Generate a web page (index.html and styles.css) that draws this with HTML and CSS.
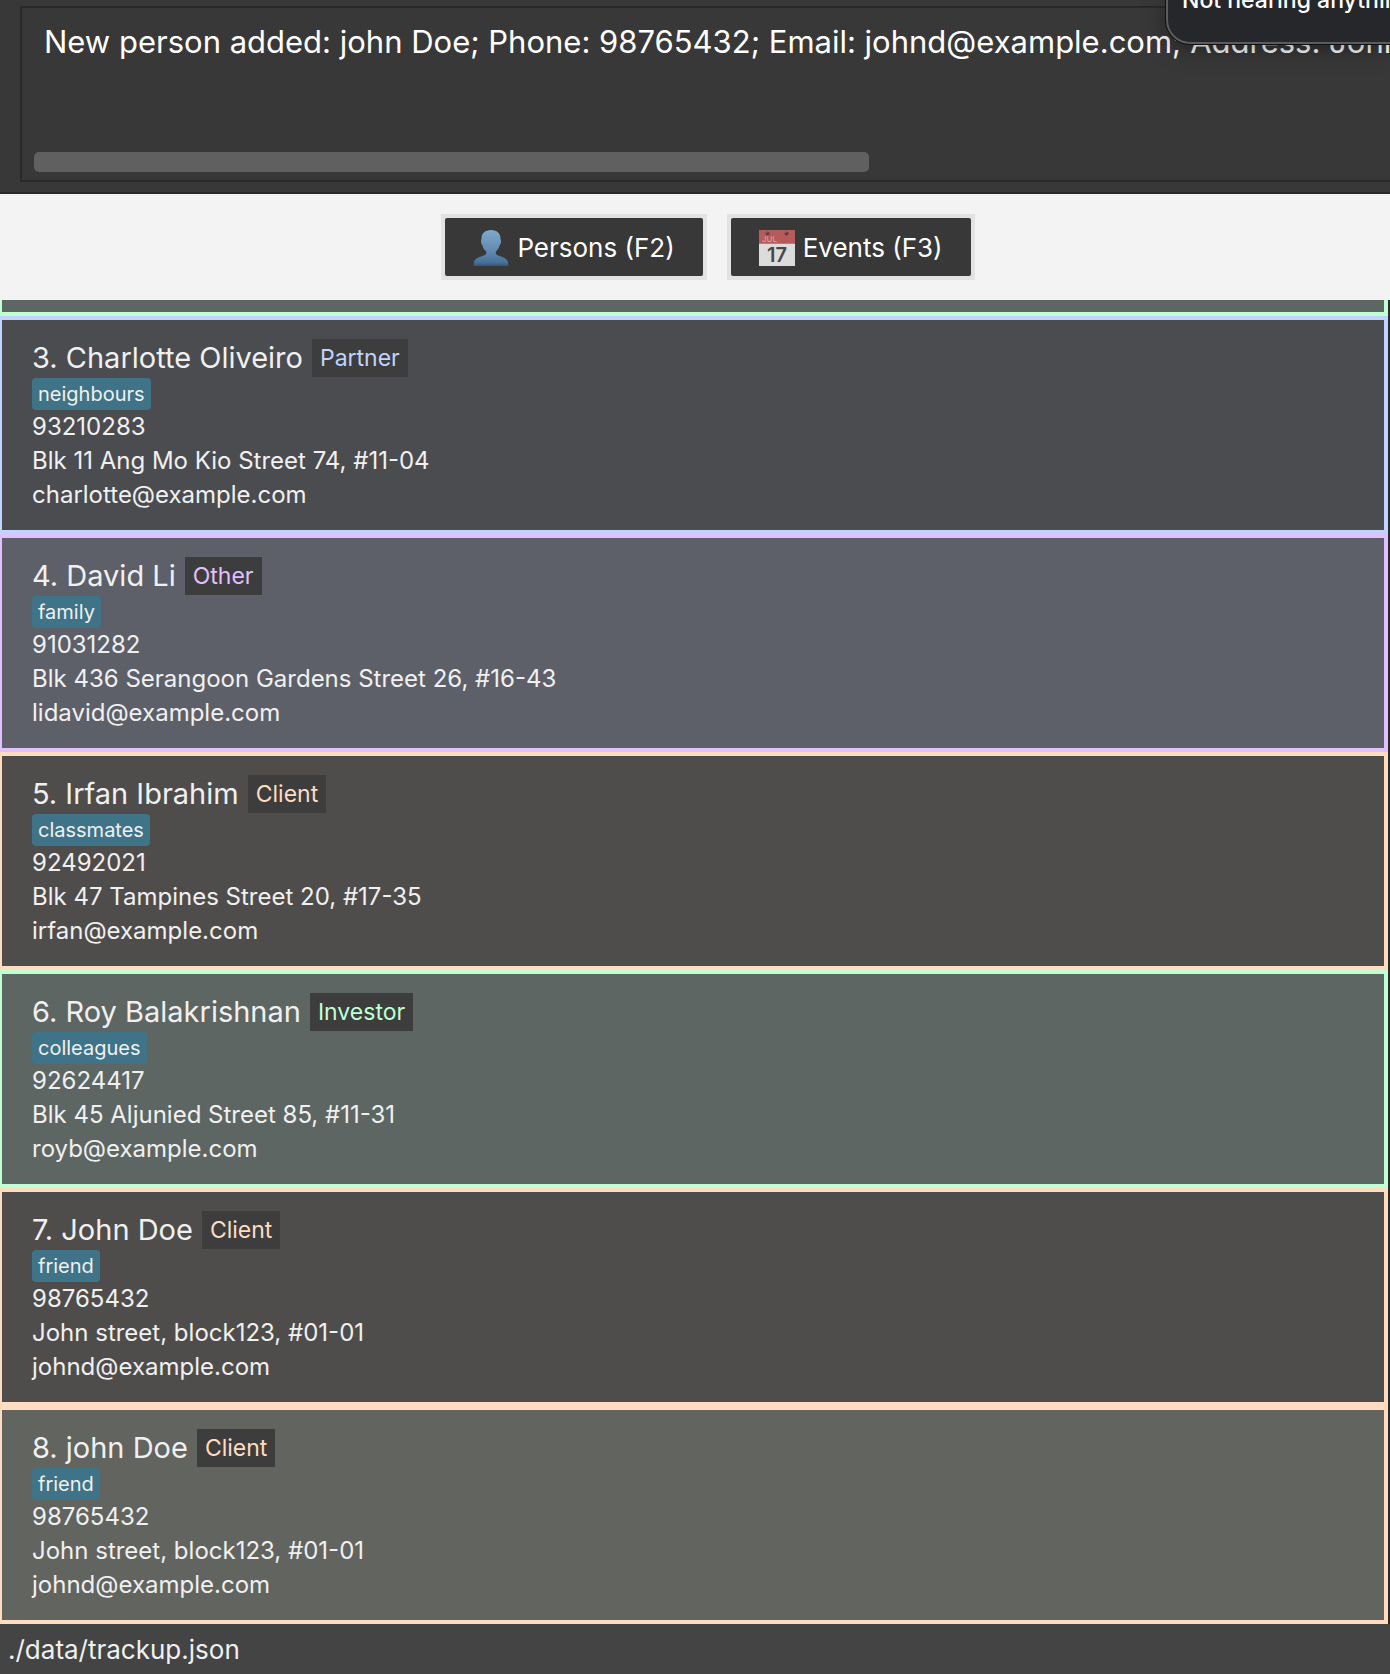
FILE: index.html
```html
<!DOCTYPE html>
<html lang="en">
<head>
<meta charset="utf-8">
<meta name="viewport" content="width=device-width, initial-scale=1">
<title>TrackUp</title>
<link rel="stylesheet" href="styles.css">
</head>
<body>
<div class="app">
  <header class="result-pane">
    <div class="result-box">
      <textarea class="result-text" aria-label="Command result" rows="1" wrap="off" readonly>New person added: john Doe; Phone: 98765432; Email: johnd@example.com; Address: John street, block123, #01-01</textarea>
      <div class="scroll-thumb"></div>
    </div>
  </header>

  <nav class="tabs">
    <button class="tab" type="button"><span class="tab-face">
      <svg class="tab-icon" viewBox="0 0 36 36" aria-hidden="true">
        <defs><linearGradient id="bust" x1="0" y1="0" x2="0" y2="1"><stop offset="0" stop-color="#80aacb"/><stop offset=".6" stop-color="#6089b0"/><stop offset=".9" stop-color="#48709a"/><stop offset="1" stop-color="#355577"/></linearGradient></defs>
        <path fill="url(#bust)" d="M18 0c6 0 9.500 3.500 9.500 8.500 0 1.500.7 2 .5 3.500-.2 2-1 2.500-1.500 3.500-.6 3-2 4-3.600 6-.8 3 .8 3.500 3.500 4.500 4.500 1.500 7.600 2.500 8.600 6 .4 1.500.5 2.500.5 4H.5c0-1.500.1-2.500.5-4 1-3.500 4.100-4.500 8.600-6 2.700-1 4.300-1.500 3.500-4.500-1.600-2-3-3-3.600-6-.5-1-1.300-1.500-1.500-3.500-.2-1.500.5-2 .5-3.500C8.500 3.500 12 0 18 0z"/>
      </svg>
      <span>Persons (F2)</span></span></button>
    <button class="tab" type="button"><span class="tab-face">
      <svg class="tab-icon" viewBox="0 0 36 36" aria-hidden="true">
        <path fill="#dcdcdc" d="M0 0h36v36H0z"/>
        <path fill="#b55b5c" d="M0 0h36v14H0z"/>
        <path fill="#c57878" d="M0 13h36v1H0z"/>
        <circle cx="8.500" cy="3.500" r="2" fill="#6a3b3c"/><circle cx="27.500" cy="3.500" r="2" fill="#6a3b3c"/>
        <path stroke="#8b6868" stroke-width="1.500" d="M7.500 0v3M26.500 0v3"/>
        <text class="cal-month" x="3" y="12">JUL</text>
        <text class="cal-day" x="18" y="32" text-anchor="middle">17</text>
      </svg>
      <span>Events (F3)</span></span></button>
  </nav>

  <main class="list">
    <article class="card investor card-cut"></article>
    <article class="card partner">
      <h2 class="name">3. Charlotte Oliveiro <span class="role">Partner</span></h2>
      <div class="tags"><span class="tag">neighbours</span></div>
      <p>93210283</p>
      <p>Blk 11 Ang Mo Kio Street 74, #11-04</p>
      <p>charlotte@example.com</p>
    </article>
    <article class="card other">
      <h2 class="name">4. David Li <span class="role">Other</span></h2>
      <div class="tags"><span class="tag">family</span></div>
      <p>91031282</p>
      <p>Blk 436 Serangoon Gardens Street 26, #16-43</p>
      <p>lidavid@example.com</p>
    </article>
    <article class="card client">
      <h2 class="name">5. Irfan Ibrahim <span class="role">Client</span></h2>
      <div class="tags"><span class="tag">classmates</span></div>
      <p>92492021</p>
      <p>Blk 47 Tampines Street 20, #17-35</p>
      <p>irfan@example.com</p>
    </article>
    <article class="card investor">
      <h2 class="name">6. Roy Balakrishnan <span class="role">Investor</span></h2>
      <div class="tags"><span class="tag">colleagues</span></div>
      <p>92624417</p>
      <p>Blk 45 Aljunied Street 85, #11-31</p>
      <p>royb@example.com</p>
    </article>
    <article class="card client">
      <h2 class="name">7. John Doe <span class="role">Client</span></h2>
      <div class="tags"><span class="tag">friend</span></div>
      <p>98765432</p>
      <p>John street, block123, #01-01</p>
      <p>johnd@example.com</p>
    </article>
    <article class="card client even">
      <h2 class="name">8. john Doe <span class="role">Client</span></h2>
      <div class="tags"><span class="tag">friend</span></div>
      <p>98765432</p>
      <p>John street, block123, #01-01</p>
      <p>johnd@example.com</p>
    </article>
  </main>

  <footer class="status">./data/trackup.json</footer>
  <aside class="toast">Not hearing anything</aside>
</div>
</body>
</html>
```
FILE: styles.css
```css
* { box-sizing: border-box; }

body {
  margin: 0;
  background: #383838;
  color: #f0f0f0;
  font-family: Inter, "Liberation Sans", sans-serif;
  font-size: 24px;
}

.app {
  position: relative;
  display: flex;
  flex-direction: column;
  min-height: 100vh;
  overflow: hidden;
}

/* Command result */
.result-pane {
  padding: 6px 0 10px 20px;
  border-bottom: 2px solid #292929;
  background: #383838;
}

.result-box {
  display: flex;
  flex-direction: column;
  justify-content: space-between;
  min-height: 176px;
  padding: 14px 0 8px 12px;
  border: 2px solid #292929;
  border-right: 0;
}

.result-text {
  display: block;
  width: 100%;
  height: 42px;
  padding: 0 0 0 10px;
  border: 0;
  outline: 0;
  resize: none;
  overflow: hidden;
  background: transparent;
  color: #fff;
  font-family: inherit;
  font-size: 31px;
  line-height: 40px;
  white-space: pre;
}

.scroll-thumb {
  width: 61.6%;
  height: 20px;
  border-radius: 5px;
  background: #606060;
}

/* View switch */
.tabs {
  display: flex;
  justify-content: center;
  gap: 20px;
  padding: 20px 0 20px 26px;
  background: #f3f3f3;
}

.tab {
  padding: 4px;
  border: 0;
  background: #e2e2e2;
  color: #fff;
  font-family: inherit;
  font-size: 26px;
  line-height: 34px;
}

.tab-face {
  display: flex;
  align-items: center;
  gap: 8px;
  padding: 13px 28px 11px;
  border-radius: 2px;
  background: #383838;
}

.tab-icon {
  flex: none;
  width: 36px;
  height: 36px;
  margin: -1px 0;
}

.cal-month { font-size: 8px; fill: #dba5a5; }
.cal-day { font-size: 20px; font-weight: 600; fill: #484848; }

/* Person list */
.list {
  flex: 1;
  padding-right: 2px;
  background: #2b2b2b;
}

.card {
  --accent: #ffdcc0;
  padding: 19px 30px 18px;
  border: 4px solid var(--accent);
  border-left-width: 2px;
  background: #4f4d4b;
}

.card-cut {
  height: 16px;
  padding: 0;
  border-top: 0;
}

.partner { --accent: #c0d4ff; background: #4a4c50; }
.other { --accent: #e0c0ff; background: #5e6069; }
.investor { --accent: #c0ffd4; background: #5d6662; }
.even { background: #626460; }

.name {
  display: flex;
  gap: 9px;
  margin: 0 0 1px;
  font-size: 29px;
  font-weight: 400;
  line-height: 38px;
}

.role {
  padding: 0 8px;
  background: #3d3d3d;
  color: var(--accent);
  font-size: 23px;
}

.tags { display: flex; }

.tag {
  padding: 0 6px;
  border-radius: 4px;
  background: #3e7388;
  font-size: 20px;
  line-height: 32px;
}

.card p {
  margin: 0;
  font-size: 24px;
  line-height: 34px;
}

.status {
  padding: 8px 8px 6px;
  background: #444;
  font-size: 26px;
  line-height: 36px;
}

/* Notification that hangs over the top right corner */
.toast {
  position: absolute;
  top: 0;
  right: 0;
  width: 224px;
  height: 44px;
  padding-left: 14px;
  border: solid #5c5c5e;
  border-width: 0 0 2px 2px;
  border-bottom-left-radius: 24px;
  overflow: hidden;
  background: #26272a;
  box-shadow: 0 0 0 1px #111, 0 4px 24px rgba(0, 0, 0, .4);
  color: #fff;
  font-size: 23px;
  font-weight: 500;
  line-height: 0;
  white-space: nowrap;
}
```
